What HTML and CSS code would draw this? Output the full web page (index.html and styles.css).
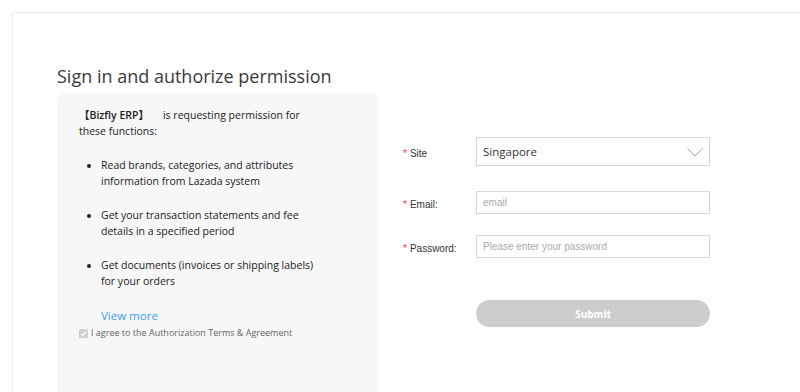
FILE: index.html
```html
<!DOCTYPE html>
<html lang="en">
<head>
<meta charset="utf-8">
<title>Sign in and authorize permission</title>
<link rel="stylesheet" href="styles.css">
</head>
<body>
<div class="frame">
  <h1 class="title">Sign in and authorize permission</h1>
  <div class="row">
    <section class="panel">
      <p class="intro"><b class="app">【Bizfly ERP】</b>is requesting permission for these functions:</p>
      <ul class="perms">
        <li>Read brands, categories, and attributes information from Lazada system</li>
        <li>Get your transaction statements and fee details in a specified period</li>
        <li>Get documents (invoices or shipping labels) for your orders</li>
      </ul>
      <a class="more" href="#">View more</a>
      <label class="agree"><span class="check"><svg width="9" height="9" viewBox="0 0 9 9"><rect x="0" y="0" width="9" height="9" rx="1.5" fill="#cfcfcf"/><polyline points="2,4.6 3.8,6.4 7,2.8" fill="none" stroke="#fff" stroke-width="1.3"/></svg></span>I agree to the Authorization Terms &amp; Agreement</label>
    </section>
    <form class="form">
      <div class="field field-site">
        <span class="label"><i class="req">*</i>Site</span>
        <div class="select">
          <span class="value">Singapore</span>
          <svg class="chev" width="16" height="9" viewBox="0 0 16 9"><polyline points="0.5,0.5 8,8 15.5,0.5" fill="none" stroke="#a8a8a8" stroke-width="1"/></svg>
        </div>
      </div>
      <div class="field field-email">
        <span class="label"><i class="req">*</i>Email:</span>
        <input class="input" type="text" placeholder="email">
      </div>
      <div class="field field-pass">
        <span class="label"><i class="req">*</i>Password:</span>
        <input class="input" type="password" placeholder="Please enter your password">
      </div>
      <button class="submit" type="button">Submit</button>
    </form>
  </div>
</div>
</body>
</html>
```
FILE: styles.css
```css
html, body {
  margin: 0;
  padding: 0;
  background: #fff;
}
body {
  padding: 12px 0 0 12px;
  height: 392px;
  box-sizing: border-box;
  overflow: hidden;
}
.frame {
  border-top: 1px solid #ececec;
  border-left: 1px solid #ececec;
  padding: 48px 0 0 44px;
  height: 380px;
  box-sizing: border-box;
  overflow: hidden;
}
.title {
  margin: 0;
  font-family: "Open Sans", sans-serif;
  font-weight: 400;
  font-size: 18px;
  line-height: 30px;
  color: #3a3a3a;
}
.row {
  display: flex;
  margin-top: 2px;
}
.panel {
  width: 321px;
  height: 299px;
  box-sizing: border-box;
  background: #f7f7f7;
  border-radius: 7px 7px 0 0;
  padding: 14px 50px 0 22px;
  font-family: "Open Sans", "Noto Sans CJK SC", sans-serif;
  font-size: 10.5px;
  line-height: 16px;
  color: #222;
}
.intro {
  margin: 0;
}
.app {
  display: inline-block;
  font-weight: 600;
  margin-right: 14px;
  line-height: 16px;
  height: 16px;
  vertical-align: top;
}
.perms {
  margin: 18px 0 0;
  padding: 0 0 0 22px;
}
.perms li {
  margin-bottom: 18px;
}
.perms li:last-child {
  margin-bottom: 0;
}
.more {
  display: block;
  margin: 19px 0 0 22px;
  color: #3d9cf0;
  text-decoration: none;
  font-size: 11.5px;
  line-height: 16px;
}
.agree {
  display: flex;
  align-items: center;
  gap: 3px;
  margin-top: 2px;
  font-size: 9px;
  line-height: 14px;
  color: #666;
}
.check {
  display: flex;
}
.form {
  margin: 44px 0 0 22px;
  width: 310px;
  font-family: "Liberation Sans", Arial, sans-serif;
  font-size: 10px;
  color: #333;
}
.field {
  display: flex;
  align-items: center;
}
.label {
  width: 76px;
  padding-top: 4px;
  padding-left: 3px;
  box-sizing: border-box;
}
.req {
  font-style: normal;
  color: #f23c3c;
  margin-right: 3px;
}
.select {
  width: 234px;
  height: 29px;
  box-sizing: border-box;
  border: 1px solid #d8d8d8;
  display: flex;
  align-items: center;
  justify-content: space-between;
  padding: 0 6px 0 6px;
}
.select .value {
  font-family: "Open Sans", sans-serif;
  font-size: 11.5px;
  color: #333;
}
.chev {
  margin-top: 1px;
}
.field-email {
  margin-top: 25px;
}
.field-pass {
  margin-top: 21px;
}
.input {
  width: 234px;
  height: 23px;
  box-sizing: border-box;
  border: 1px solid #d8d8d8;
  padding: 0 6px;
  font-family: "Liberation Sans", Arial, sans-serif;
  font-size: 10px;
  color: #333;
  outline: none;
  background: #fff;
}
.input::placeholder {
  color: #aaa;
}
.submit {
  display: block;
  margin: 42px 0 0 76px;
  width: 234px;
  height: 27px;
  border: none;
  border-radius: 14px;
  background: #cdcdcd;
  color: #fff;
  font-family: "Open Sans", sans-serif;
  font-weight: 700;
  font-size: 10px;
}
```
